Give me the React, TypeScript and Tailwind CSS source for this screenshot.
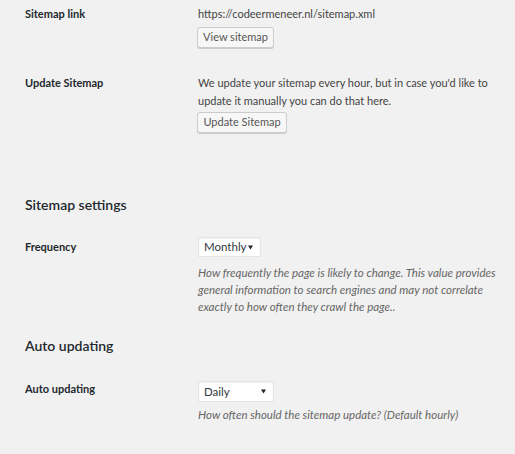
import React from 'react';

// One form row: label column left, field column right
function Row({
  label,
  labelClass = 'leading-[18px]',
  className = '',
  children,
}: {
  label: string;
  labelClass?: string;
  className?: string;
  children: React.ReactNode;
}) {
  return (
    <div className={`grid grid-cols-[173px_1fr] ${className}`}>
      <div className={`font-bold text-[11px] text-[#23282d] ${labelClass}`}>{label}</div>
      <div>{children}</div>
    </div>
  );
}

function WpButton({ children, width }: { children: React.ReactNode; width: string }) {
  return (
    <button
      className={`${width} h-[21px] -ml-px flex items-center justify-center bg-[#f7f7f7] border border-[#cccccc] rounded-[3px] shadow-[0_1px_0_#cccccc] text-[#555555] text-[11px]`}
    >
      {children}
    </button>
  );
}

function WpSelect({ value, width, height }: { value: string; width: string; height: string }) {
  return (
    <div
      className={`${width} ${height} flex items-center justify-between bg-white border border-[#e5e5e5] shadow-[inset_0_1px_2px_rgba(0,0,0,0.07)] pl-[5px] pr-[7px] text-[11.5px] text-[#32373c]`}
    >
      <span>{value}</span>
      <svg width="5" height="5" viewBox="0 0 5 5">
        <path d="M0 0.5h5L2.5 4.5z" fill="#222" />
      </svg>
    </div>
  );
}

export default function App() {
  return (
    <div className="w-[515px] min-h-[454px] bg-[#f1f1f1] pl-[25px] pt-[5px] text-[11px] text-[#444444] font-['Lato',sans-serif]">
      <Row label="Sitemap link">
        <div className="leading-[18px]">https://codeermeneer.nl/sitemap.xml</div>
        <div className="mt-[4px]">
          <WpButton width="w-[77px]">View sitemap</WpButton>
        </div>
      </Row>

      <Row label="Update Sitemap" className="mt-[26px]">
        <div className="leading-[18px]">
          We update your sitemap every hour, but in case you'd like to update it manually you can do that here.
        </div>
        <div className="mt-[2px]">
          <WpButton width="w-[90px]">Update Sitemap</WpButton>
        </div>
      </Row>

      <h2 className="mt-[61px] text-[14px] leading-[22px] font-semibold text-[#23282d]">Sitemap settings</h2>

      <Row label="Frequency" labelClass="leading-[20px]" className="mt-[21px]">
        <WpSelect value="Monthly" width="w-[63px]" height="h-[20px]" />
        <p className="mt-[7px] italic text-[11.5px] leading-[17px] text-[#666666]">
          How frequently the page is likely to change. This value provides general information to search engines and may not correlate exactly to how often they crawl the page..
        </p>
      </Row>

      <h2 className="mt-[20px] text-[14px] leading-[22px] font-semibold text-[#23282d]">Auto updating</h2>

      <Row label="Auto updating" labelClass="leading-[16px]" className="mt-[24px]">
        <WpSelect value="Daily" width="w-[76px]" height="h-[21px]" />
        <p className="mt-[4px] italic text-[11.5px] leading-[17px] text-[#666666]">
          How often should the sitemap update? (Default hourly)
        </p>
      </Row>
    </div>
  );
}
